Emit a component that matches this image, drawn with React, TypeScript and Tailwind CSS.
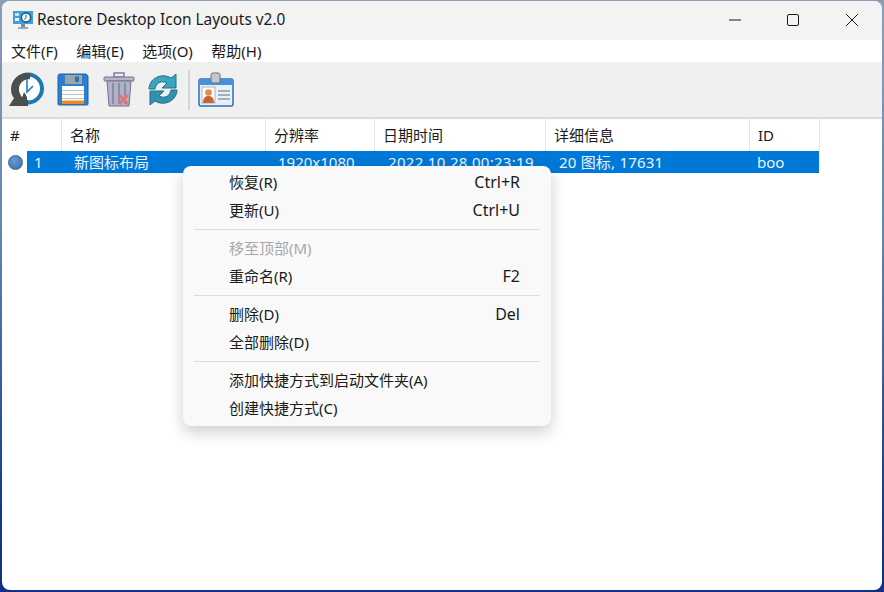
const FONT = "font-['Noto_Sans','Noto_Sans_CJK_SC',sans-serif]";

const COLUMNS = [
  { label: "#", width: "w-[60px]" },
  { label: "名称", width: "w-[204px]" },
  { label: "分辨率", width: "w-[109px]" },
  { label: "日期时间", width: "w-[171px]" },
  { label: "详细信息", width: "w-[204px]" },
  { label: "ID", width: "w-[70px]" },
];

const MENU_GROUPS = [
  [
    { label: "恢复(R)", key: "Ctrl+R" },
    { label: "更新(U)", key: "Ctrl+U" },
  ],
  [
    { label: "移至顶部(M)", disabled: true },
    { label: "重命名(R)", key: "F2" },
  ],
  [
    { label: "删除(D)", key: "Del" },
    { label: "全部删除(D)" },
  ],
  [
    { label: "添加快捷方式到启动文件夹(A)" },
    { label: "创建快捷方式(C)" },
  ],
];

function AppIcon() {
  return (
    <svg width="22" height="20" viewBox="0 0 22 20">
      <rect x="1" y="1" width="20" height="13" fill="#3fa0dc" />
      <rect x="3" y="3" width="4" height="3" fill="#bfe4f7" />
      <rect x="3" y="8" width="4" height="3" fill="#e8f5fb" />
      <circle cx="14" cy="7.500" r="4.600" fill="#fff" stroke="#17628f" strokeWidth="1.600" />
      <path d="M14 4.500v3l-1.500 2" stroke="#17628f" fill="none" />
      <rect x="9" y="14" width="4" height="3" fill="#7d8b94" />
      <rect x="6" y="17" width="10" height="2" fill="#9aa6ad" />
    </svg>
  );
}

function RestoreIcon() {
  return (
    <svg width="38" height="36" viewBox="0 0 38 36">
      <circle cx="20" cy="16.500" r="14" fill="#fff" stroke="#1e78b4" strokeWidth="4" />
      <path d="M22 1C11 0 3 8 3 17c0 4 1 7 3 9l-5 8h19v-6c-5-1-9-5-9-11 0-6 5-10 11-10z" fill="#4b504e" />
      <path d="M14 26l2-6 3 5v9h-7z" fill="#4b504e" />
      <path d="M19 7v13l6-6" stroke="#2c7db5" strokeWidth="1.600" fill="none" />
    </svg>
  );
}

function SaveIcon() {
  return (
    <svg width="32" height="33" viewBox="0 0 32 33">
      <path d="M1 3a2 2 0 0 1 2-2h26l2 2v28a1 1 0 0 1-1 1H2a1 1 0 0 1-1-1z" fill="#2b7fd0" stroke="#1f62a8" />
      <rect x="8" y="2" width="17" height="9" fill="#9aa7a8" />
      <rect x="18" y="3.500" width="4" height="5.500" fill="#3c6f9f" />
      <rect x="5" y="13" width="22" height="18" fill="#fff" />
      <path d="M5 17.500h22M5 21.500h22M5 25.500h22" stroke="#b9c4cc" />
      <rect x="5" y="27.500" width="22" height="3.500" fill="#f08a1e" />
    </svg>
  );
}

function TrashIcon() {
  return (
    <svg width="32" height="35" viewBox="0 0 32 35">
      <rect x="11" y="1" width="10" height="4" fill="none" stroke="#7c7f9a" strokeWidth="1.500" />
      <rect x="1" y="5" width="30" height="4" rx="1" fill="#b4b6c8" stroke="#6f7290" />
      <path d="M4 9h24l-2 25H6z" fill="#b0b2c6" stroke="#6f7290" />
      <path d="M10 11v21M16 11v21M22 11v21" stroke="#7d80a2" strokeWidth="1.500" />
      <path d="M16 23l9 9M25 23l-9 9" stroke="#e2747a" strokeWidth="3" />
    </svg>
  );
}

function RefreshIcon() {
  return (
    <svg width="30" height="33" viewBox="0 0 30 33">
      <path d="M1 16C1 6 13-1 23 5l5-4v14H14l5-5c-6-3-11 0-12 6z" fill="#3ba5bb" stroke="#1f6f8f" />
      <path d="M29 17c0 10-12 17-22 11l-5 4V18h14l-5 5c6 3 11 0 12-6z" fill="#2f93ad" stroke="#1f6f8f" />
    </svg>
  );
}

function CardIcon() {
  return (
    <svg width="36" height="35" viewBox="0 0 36 35">
      <rect x="1" y="7" width="34" height="27" rx="2" fill="#e9eff5" stroke="#2d6fb8" strokeWidth="1.500" />
      <path d="M1 9a2 2 0 0 1 2-2h30a2 2 0 0 1 2 2v4H1z" fill="#4a90d9" />
      <rect x="13" y="1" width="9" height="10" rx="2" fill="#c3c8cc" stroke="#6d747a" />
      <rect x="4" y="15" width="13" height="16" fill="#fff" stroke="#a9b6c2" />
      <circle cx="10.500" cy="20.500" r="3.300" fill="#e98a48" />
      <path d="M5 31c0-6 3-7 5.500-7s5.500 1 5.500 7z" fill="#c9642c" />
      <path d="M20 19h12M20 23h12M20 27h12" stroke="#8f9aa3" strokeWidth="1.400" />
    </svg>
  );
}

function WindowButtons() {
  return (
    <div className="ml-auto flex pr-[1px] text-[#1a1a1a]">
      <div className="flex w-[58px] justify-center">
        <svg width="12" height="12" viewBox="0 0 12 12">
          <path d="M0 6h12" stroke="currentColor" />
        </svg>
      </div>
      <div className="flex w-[58px] justify-center">
        <svg width="12" height="12" viewBox="0 0 12 12">
          <rect x="0.500" y="0.500" width="11" height="11" rx="1.500" fill="none" stroke="currentColor" />
        </svg>
      </div>
      <div className="flex w-[59px] justify-center">
        <svg width="12" height="12" viewBox="0 0 12 12">
          <path d="M0 0l12 12M12 0L0 12" stroke="currentColor" />
        </svg>
      </div>
    </div>
  );
}

export default function App() {
  return (
    <div className={`h-[592px] w-[884px] overflow-hidden bg-[linear-gradient(180deg,#8d9db5_0%,#5d88b0_40%,#123a94_85%,#0f2f86_100%)] pl-[2px] pt-[1px] ${FONT}`}>
      <div className="relative flex h-[589px] w-[880px] flex-col overflow-hidden rounded-[8px] bg-white text-[#1a1a1a]">
        {/* Title bar */}
        <div className="flex h-[39px] shrink-0 items-center bg-[#f3f3f3] pb-[2px]">
          <div className="ml-[10px] flex w-[25px] shrink-0">
            <AppIcon />
          </div>
          <span className="text-[15.400px] whitespace-nowrap">Restore Desktop Icon Layouts v2.0</span>
          <WindowButtons />
        </div>

        {/* Menu bar */}
        <div className="flex h-[22px] shrink-0 items-center gap-[18.500px] bg-white pl-[9px] text-[15px]">
          <span>文件(F)</span>
          <span>编辑(E)</span>
          <span>选项(O)</span>
          <span>帮助(H)</span>
        </div>

        {/* Toolbar */}
        <div className="flex h-[57px] shrink-0 items-center border-b-2 border-[#dcdcd2] bg-[#f0f0f0] pl-[6px]">
          <RestoreIcon />
          <div className="ml-[11px]"><SaveIcon /></div>
          <div className="ml-[14px]"><TrashIcon /></div>
          <div className="ml-[13px]"><RefreshIcon /></div>
          <div className="ml-[10px] h-[40px] w-[2px] bg-[#d6d6d6]" />
          <div className="ml-[8px]"><CardIcon /></div>
        </div>

        {/* List header */}
        <div className="flex h-[32px] shrink-0 bg-white text-[15px]">
          {COLUMNS.map((col) => (
            <div
              key={col.label}
              className={`flex h-full items-center border-r border-[#e5e5e5] pl-[8px] pt-[1px] ${col.width}`}
            >
              {col.label}
            </div>
          ))}
        </div>

        {/* Selected row */}
        <div className="flex h-[22px] shrink-0 items-center text-[15px]">
          <div className="flex w-[25px] justify-center pl-[2px]">
            <span className="h-[15px] w-[15px] rounded-full border border-[#3c6795] bg-[radial-gradient(circle_at_40%_35%,#6a9ad0,#336ba8)]" />
          </div>
          <div className="flex h-full w-[792px] items-center bg-[#0078d7] text-[#eaf4fc]">
            <span className="w-[47px] pl-[7px]">1</span>
            <span className="w-[204px]">新图标布局</span>
            <span className="w-[110px]">1920x1080</span>
            <span className="w-[171px] tracking-[0.3px]">2022.10.28 00:23:19</span>
            <span className="w-[198px] tracking-[0.2px]">20 图标, 17631</span>
            <span>boo</span>
          </div>
        </div>

        {/* Context menu */}
        <div className="absolute left-[181px] top-[165px] w-[368px] rounded-[8px] bg-[#f9f9f9] pb-[4.500px] pt-[2.500px] text-[15px] shadow-[0_6px_16px_rgba(0,0,0,0.2)]">
          {MENU_GROUPS.map((group, i) => (
            <div key={i}>
              {i > 0 && <div className="mx-[11px] my-[5px] h-px bg-[#dcdcdc]" />}
              {group.map((item) => (
                <div
                  key={item.label}
                  className={`flex h-[27.500px] items-center justify-between pl-[46px] pr-[31px] ${item.disabled ? "text-[#a8a8a8]" : ""}`}
                >
                  <span>{item.label}</span>
                  {item.key && <span className="text-[16px]">{item.key}</span>}
                </div>
              ))}
            </div>
          ))}
        </div>
      </div>
    </div>
  );
}
